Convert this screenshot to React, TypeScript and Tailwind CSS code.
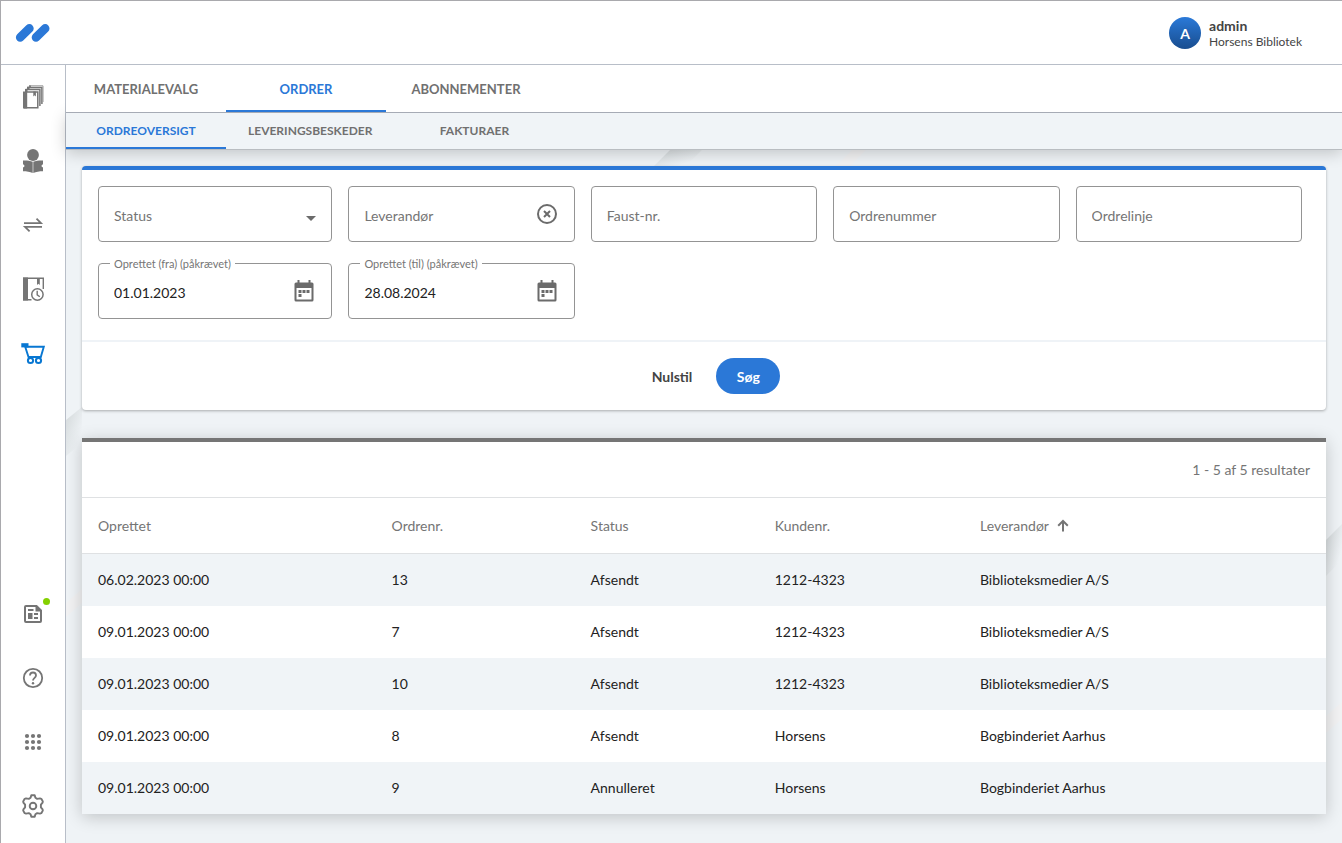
import { useState } from "react";
import type { ReactNode } from "react";
import clsx from "clsx";
import { MdArrowDropDown } from "react-icons/md";

const tabs = ["Materialevalg", "Ordrer", "Abonnementer"];
const subTabs = ["Ordreoversigt", "Leveringsbeskeder", "Fakturaer"];

const orders = [
  { created: "06.02.2023 00:00", no: "13", status: "Afsendt", customer: "1212-4323", supplier: "Biblioteksmedier A/S" },
  { created: "09.01.2023 00:00", no: "7", status: "Afsendt", customer: "1212-4323", supplier: "Biblioteksmedier A/S" },
  { created: "09.01.2023 00:00", no: "10", status: "Afsendt", customer: "1212-4323", supplier: "Biblioteksmedier A/S" },
  { created: "09.01.2023 00:00", no: "8", status: "Afsendt", customer: "Horsens", supplier: "Bogbinderiet Aarhus" },
  { created: "09.01.2023 00:00", no: "9", status: "Annulleret", customer: "Horsens", supplier: "Bogbinderiet Aarhus" },
];

function Logo() {
  return (
    <svg width="36" height="20" viewBox="0 0 36 20" stroke="#2b78d7" strokeWidth="8.6" strokeLinecap="round">
      <path d="M5.2 14.400 14.400 5.400M21 14.400 30.200 5.400" />
    </svg>
  );
}

function BooksIcon() {
  return (
    <svg width="24" height="24" viewBox="0 0 24 24" fill="none" stroke="#757575">
      <path d="M2 6.500h4.200v17H2z" fill="#757575" stroke="none" />
      <path d="M4 4h2.500v3H4zM6 1.800h2.500v2.700H6zM8 .3h2v2H8z" fill="#757575" stroke="none" />
      <path d="M5 7h11.800v15.800H3" strokeWidth="1.500" />
      <path d="M4.500 4.500h14.400V21" strokeWidth="1.500" />
      <path d="M6.500 2.500h14.400V19" strokeWidth="1.500" />
      <path d="M8 .8h14V17" strokeWidth="1" stroke="#9a9a9a" />
      <path d="M12.300 6.500v5l1.300-1.200 1.300 1.200v-5z" fill="#757575" stroke="none" />
    </svg>
  );
}

function ReaderIcon() {
  return (
    <svg width="24" height="24" viewBox="0 0 24 24" fill="#757575">
      <circle cx="12" cy="6" r="5.900" />
      <path d="M2 11.500c3.500-.2 7 .2 9.700 1.300v11.100c-2.700-1-6-1.600-9.700-1.600v-4c.9 0 1.400-.6 1.400-1.400s-.5-1.400-1.400-1.400z" />
      <path d="M22 11.500c-3.500-.2-7 .2-9.700 1.300v11.100c2.700-1 6-1.600 9.700-1.600v-4c-.9 0-1.400-.6-1.400-1.400s.5-1.400 1.400-1.400z" />
    </svg>
  );
}

function SwapIcon() {
  return (
    <svg width="24" height="24" viewBox="0 0 24 24" fill="none" stroke="#757575" strokeWidth="1.800">
      <path d="M3 10.200h17L15.500 5.600M21 13.800H4l4.600 4.600" />
    </svg>
  );
}

function BookClockIcon() {
  return (
    <svg width="24" height="24" viewBox="0 0 24 24" fill="none" stroke="#757575">
      <path d="M2 .5h5v23H2z" fill="#757575" stroke="none" />
      <path d="M2 1.200h20.300V12M2 22.800h8.500" strokeWidth="1.400" />
      <path d="M16 1v7l1.400-1.300 1.400 1.300V1z" fill="#757575" stroke="none" />
      <circle cx="16.400" cy="17.500" r="5.700" strokeWidth="1.500" />
      <path d="M16.200 13.800v4l2.600 2" strokeWidth="1.400" />
    </svg>
  );
}

function CartIcon() {
  return (
    <svg width="24" height="24" viewBox="0 0 24 24" fill="none" stroke="#0877d2" strokeWidth="2">
      <path d="M.3 2.200h7.200v4.200H.3z" fill="#0877d2" stroke="none" />
      <path d="M4 5.800h18.800l-3 10.200H7.500L4.200 5.800" strokeWidth="1.900" />
      <circle cx="9.500" cy="19.500" r="2.600" />
      <circle cx="17.500" cy="19.500" r="2.600" />
    </svg>
  );
}

function NewsIcon() {
  return (
    <svg width="24" height="24" viewBox="0 0 24 24" fill="none" stroke="#757575" strokeWidth="2">
      <path d="M5 4h10.500L20 8.500V19q0 1-1 1H5q-1 0-1-1V5q0-1 1-1z" />
      <path d="M14.500 3.500V9.500h6z" fill="#757575" stroke="none" />
      <path d="M7 8h5.500M13 12h4M13 16h4" strokeWidth="2" />
      <path d="M7 11h4.500v6H7z" fill="#757575" stroke="none" />
    </svg>
  );
}

function HelpIcon() {
  return (
    <svg width="24" height="24" viewBox="0 0 24 24" fill="none" stroke="#757575" strokeWidth="1.800">
      <circle cx="12" cy="12" r="9.200" />
      <path d="M9 9.500c0-4 6-4 6 0 0 2.200-3 2.500-3 5" />
      <circle cx="12" cy="17.200" r="1.200" fill="#757575" stroke="none" />
    </svg>
  );
}

function AppsIcon() {
  return (
    <svg width="24" height="24" viewBox="0 0 24 24" fill="#757575">
      {[6, 12, 18].map((y) => [6, 12, 18].map((x) => <circle key={`${x}-${y}`} cx={x} cy={y} r="2.1" />))}
    </svg>
  );
}

function GearIcon() {
  return (
    <svg width="24" height="24" viewBox="0 0 24 24" fill="none" stroke="#757575" strokeWidth="1.900" strokeLinejoin="round">
      <path d="M10.300 1.300h3.400l.7 2.500 1.800 1.100 2.800-.5 1.300.4 1.500 2.600-.2 1.300-1.700 2v2.600l1.700 2 .2 1.300-1.500 2.600-1.300 .4-2.800-.5-1.800 1.100-.7 2.500h-3.400l-.7-2.500-1.800-1.100-2.800 .5-1.300-.4-1.500-2.600 .2-1.300 1.700-2v-2.600l-1.700-2-.2-1.300 1.500-2.600 1.300-.4 2.800 .5 1.800-1.100z" />
      <circle cx="12" cy="12" r="3.300" />
    </svg>
  );
}

function CalendarIcon() {
  return (
    <svg width="20" height="24" viewBox="0 0 20 24" fill="#6b6b6b">
      <path d="M3.500 1h2v2.500h9V1h2v2.500H18q1.500 0 1.500 1.500v16q0 1.500-1.500 1.500H2q-1.500 0-1.500-1.500V5q0-1.500 1.500-1.500h1.500zM2.500 9v11.500h15V9z" />
      <path d="M4.500 11h3v3h-3zM8.500 11h3v3h-3zM12.500 11h3v3h-3zM4.500 15h3v3h-3z" />
    </svg>
  );
}

function ClearIcon() {
  return (
    <svg width="20" height="20" viewBox="0 0 20 20" fill="none" stroke="#6b6b6b" strokeWidth="2">
      <circle cx="10" cy="10" r="9" />
      <path d="m7 7 6 6M13 7l-6 6" />
    </svg>
  );
}

function SortIcon() {
  return (
    <svg width="12" height="14" viewBox="0 0 12 14" fill="none" stroke="#757575" strokeWidth="2">
      <path d="M6 12.500V2.500M1.200 6.700 6 2l4.800 4.700" />
    </svg>
  );
}

const mainNav = [
  { label: "Materialer", icon: <BooksIcon /> },
  { label: "Lånere", icon: <ReaderIcon /> },
  { label: "Cirkulation", icon: <SwapIcon /> },
  { label: "Reserveringer", icon: <BookClockIcon /> },
  { label: "Indkøb", icon: <CartIcon /> },
];

const footerNav = [
  { label: "Nyheder", icon: <NewsIcon />, dot: true },
  { label: "Hjælp", icon: <HelpIcon /> },
  { label: "Apps", icon: <AppsIcon /> },
  { label: "Indstillinger", icon: <GearIcon /> },
];

function NavButton({ label, icon, dot }: { label: string; icon: ReactNode; dot?: boolean }) {
  return (
    <button type="button" aria-label={label} className="relative flex h-16 w-16 items-center justify-center">
      {icon}
      {dot && <span className="absolute right-[15px] top-4 h-[7px] w-[7px] rounded-full bg-[#84d000]" />}
    </button>
  );
}

interface FieldProps {
  id: string;
  label: string;
  defaultValue?: string;
  action?: ReactNode;
  actionLabel?: string;
}

function Field({ id, label, defaultValue, action, actionLabel }: FieldProps) {
  return (
    <div className="relative flex h-14 items-center rounded border border-[#949494]">
      {defaultValue && (
        <label htmlFor={id} className="absolute -top-2 left-[11px] bg-white px-1 text-[11px] leading-4 text-[#757575]">
          {label}
        </label>
      )}
      <input
        id={id}
        aria-label={label}
        placeholder={defaultValue ? undefined : label}
        defaultValue={defaultValue}
        className="h-full w-full min-w-0 bg-transparent pl-[15px] pt-0.5 text-sm text-[#222] outline-none placeholder:text-[#757575]"
      />
      {action && (
        <button type="button" aria-label={actionLabel} className="mr-[17px] shrink-0">
          {action}
        </button>
      )}
    </div>
  );
}

// Oversized logo strokes that show faintly between the cards
function Backdrop() {
  return (
    <svg
      className="absolute inset-0 h-full w-full"
      preserveAspectRatio="xMinYMin slice"
      viewBox="0 0 1276 693"
      aria-hidden="true"
    >
      <defs>
        <linearGradient id="fade" x1="0" y1="0" x2="1" y2="1">
          <stop offset="0.2" stopColor="#dadfe1" />
          <stop offset="0.75" stopColor="#dadfe1" stopOpacity="0" />
        </linearGradient>
      </defs>
      <path d="M588 16 604 0h32l-16 16z" fill="url(#fade)" />
      <path d="M0 270 16 257v36L0 306z" fill="url(#fade)" />
      <path d="M1260 390 1276 374v36l-16 16z" fill="url(#fade)" />
      <path d="M770 16 786 0h14l-16 16zM1260 566 1276 552v17l-16 14zM0 453 16 439v14L0 467z" fill="#f2f2f3" />
    </svg>
  );
}

export default function App() {
  const [tab, setTab] = useState("Ordrer");
  const [subTab, setSubTab] = useState("Ordreoversigt");

  return (
    <div className="flex min-h-screen flex-col border-l border-t border-[#a9a9ad] bg-white font-['Lato',sans-serif] text-sm text-[#222]">
      <header className="flex h-16 items-center justify-between border-b border-[#b8bec8] pl-3.5 pr-10">
        <a href="#" aria-label="Forside">
          <Logo />
        </a>
        <div className="flex items-center gap-2">
          <span className="flex h-8 w-8 items-center justify-center rounded-full bg-linear-to-b from-[#2b7ad9] to-[#184d8f] pt-0.5 font-bold text-white">
            A
          </span>
          <div className="pt-0.5 text-[#444]">
            <p className="font-bold leading-4">admin</p>
            <p className="text-xs leading-4">Horsens Bibliotek</p>
          </div>
        </div>
      </header>

      <div className="flex flex-1">
        <nav className="flex shrink-0 flex-col justify-between border-r border-[#b8bec8] pb-[5px]">
          <div>
            {mainNav.map((item) => (
              <NavButton key={item.label} {...item} />
            ))}
          </div>
          <div>
            {footerNav.map((item) => (
              <NavButton key={item.label} {...item} />
            ))}
          </div>
        </nav>

        <div className="flex min-w-0 flex-1 flex-col">
          <div className="relative z-20 flex h-12 border-b border-[#a6abb5] bg-white">
            {tabs.map((name) => (
              <button
                key={name}
                type="button"
                onClick={() => setTab(name)}
                className={clsx(
                  "w-40 border-b-2 pt-1 text-[13px] font-bold uppercase",
                  tab === name ? "border-[#2b78d7] text-[#2b78d7]" : "border-transparent text-[#707070]",
                )}
              >
                {name}
              </button>
            ))}
          </div>
          <div className="relative z-10 flex h-[37px] border-b border-[#b9bdc1] bg-[#f0f4f7] shadow-[0_3px_16px_rgba(0,0,0,0.2)]">
            {subTabs.map((name) => (
              <button
                key={name}
                type="button"
                onClick={() => setSubTab(name)}
                className={clsx(
                  "min-w-40 border-b-2 px-[22px] pt-0.5 text-xs font-bold uppercase",
                  subTab === name ? "border-[#2b78d7] text-[#2b78d7]" : "border-transparent text-[#707070]",
                )}
              >
                {name}
              </button>
            ))}
          </div>

          <main className="relative flex-1 bg-[#eff3f6]">
            <Backdrop />
            <div className="relative flex flex-col gap-7 px-4 pb-7 pt-4">
              <form
                onSubmit={(e) => e.preventDefault()}
                className="rounded border-t-4 border-[#2b78d7] bg-white shadow-[0_1px_3px_rgba(0,0,0,0.3)]"
              >
                <div className="grid grid-cols-[234fr_repeat(4,226fr)] gap-x-4 gap-y-[21px] pb-[21px] pl-4 pr-6 pt-4">
                  <div className="relative">
                    <select
                      aria-label="Status"
                      className="h-14 w-full appearance-none rounded border border-[#949494] bg-transparent pl-[15px] pt-1 text-[#757575]"
                    >
                      <option>Status</option>
                      <option>Afsendt</option>
                      <option>Annulleret</option>
                    </select>
                    <MdArrowDropDown size={24} className="pointer-events-none absolute right-[9px] top-5 text-[#6b6b6b]" />
                  </div>
                  <Field id="supplier" label="Leverandør" action={<ClearIcon />} actionLabel="Ryd" />
                  <Field id="faust" label="Faust-nr." />
                  <Field id="order-no" label="Ordrenummer" />
                  <Field id="order-line" label="Ordrelinje" />
                  <Field
                    id="created-from"
                    label="Oprettet (fra) (påkrævet)"
                    defaultValue="01.01.2023"
                    action={<CalendarIcon />}
                    actionLabel="Vælg dato"
                  />
                  <Field
                    id="created-to"
                    label="Oprettet (til) (påkrævet)"
                    defaultValue="28.08.2024"
                    action={<CalendarIcon />}
                    actionLabel="Vælg dato"
                  />
                </div>
                <div className="flex justify-center gap-2 border-t-2 border-[#eff3f7] py-4 pl-2">
                  <button type="reset" className="h-9 px-4 pt-0.5 font-bold text-[#444]">
                    Nulstil
                  </button>
                  <button type="submit" className="h-9 w-16 rounded-full bg-[#2b78d7] pt-0.5 font-bold text-white">
                    Søg
                  </button>
                </div>
              </form>

              <section className="border-t-4 border-[#757575] bg-white shadow-[0_3px_16px_rgba(0,0,0,0.2)]">
                <p className="flex h-14 items-center justify-end border-b border-[#dfe1e3] px-4 text-[#757575]">
                  1 - 5 af 5 resultater
                </p>
                <table className="w-full table-fixed border-separate border-spacing-0 text-left">
                  <thead>
                    <tr className="h-14 text-[#757575]">
                      <th className="w-[23.6%] border-b border-[#dfe1e3] px-4 font-normal">Oprettet</th>
                      <th className="w-[16%] border-b border-[#dfe1e3] px-4 font-normal">Ordrenr.</th>
                      <th className="w-[14.8%] border-b border-[#dfe1e3] px-4 font-normal">Status</th>
                      <th className="w-[16.5%] border-b border-[#dfe1e3] px-4 font-normal">Kundenr.</th>
                      <th className="border-b border-[#dfe1e3] px-4 font-normal">
                        <button type="button" className="flex items-center gap-2">
                          Leverandør
                          <SortIcon />
                        </button>
                      </th>
                    </tr>
                  </thead>
                  <tbody>
                    {orders.map((order) => (
                      <tr key={order.no} className="h-13 odd:bg-[#f0f4f7]">
                        <td className="px-4">{order.created}</td>
                        <td className="px-4">{order.no}</td>
                        <td className="px-4">{order.status}</td>
                        <td className="px-4">{order.customer}</td>
                        <td className="px-4">{order.supplier}</td>
                      </tr>
                    ))}
                  </tbody>
                </table>
              </section>
            </div>
          </main>
        </div>
      </div>
    </div>
  );
}
